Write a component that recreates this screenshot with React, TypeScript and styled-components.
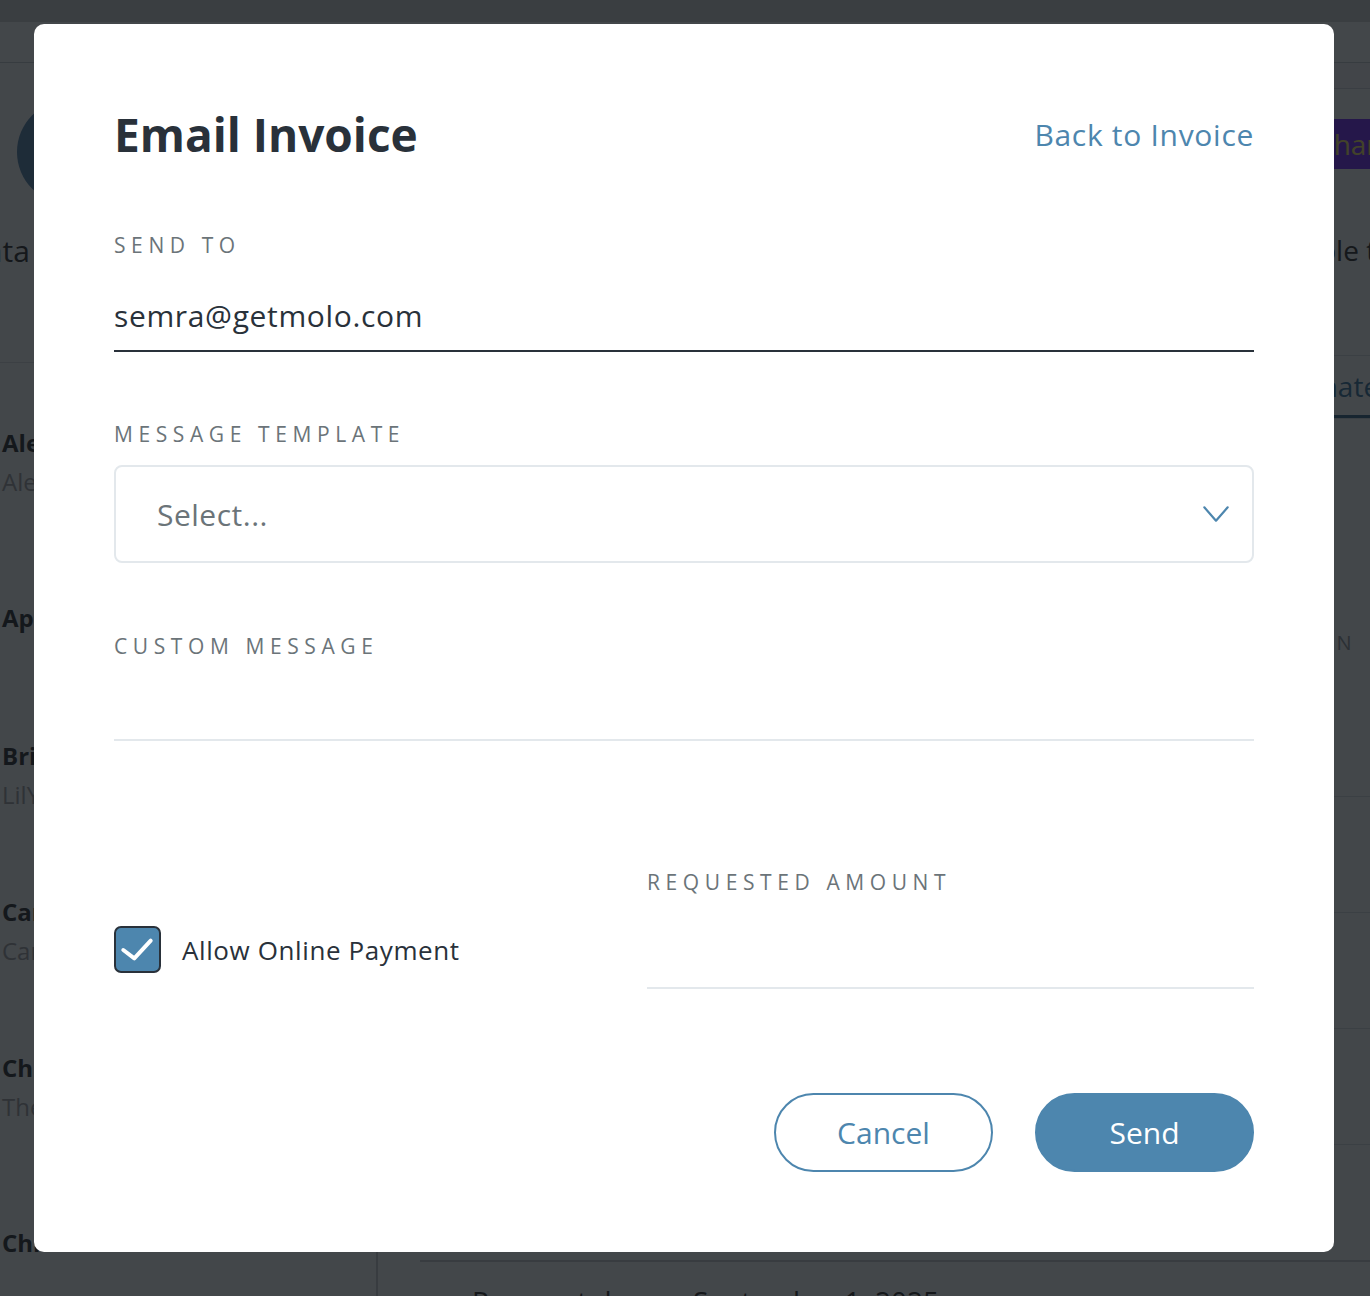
import React from "react";
import styled, { createGlobalStyle } from "styled-components";

const GlobalStyle = createGlobalStyle`
  html, body {
    margin: 0;
    padding: 0;
    background: #fbfcfd;
    overflow: hidden;
  }
  body {
    font-family: "Open Sans", "Noto Sans", Arial, sans-serif;
    color: #29313a;
  }
  * { box-sizing: border-box; }
`;

/* ---------- background page (under the overlay) ---------- */

const Page = styled.div`
  width: 1370px;
  height: 1296px;
  display: flex;
  flex-direction: column;
  overflow: hidden;
  background: #fbfcfd;
`;

const TopBar = styled.div`
  height: 22px;
  flex-shrink: 0;
  background: #cdd2d6;
`;

const SubHeader = styled.div`
  height: 41px;
  flex-shrink: 0;
  border-bottom: 1px solid #c3cad0;
`;

const Body = styled.div`
  flex: 1;
  display: flex;
  min-height: 0;
`;

const Sidebar = styled.aside`
  width: 378px;
  flex-shrink: 0;
  border-right: 2px solid #c6cbcf;
  display: flex;
  flex-direction: column;
  overflow: hidden;
`;

const Profile = styled.div`
  height: 300px;
  flex-shrink: 0;
  border-bottom: 1px solid #d8dde1;
  display: flex;
  flex-direction: column;
  padding-top: 37px;
`;

const Avatar = styled.div`
  width: 104px;
  height: 104px;
  margin-left: 17px;
  border-radius: 50%;
  background: #4b7fa9;
`;

const ProfileName = styled.div`
  margin-top: 29px;
  margin-left: -36px;
  font-size: 30px;
  line-height: 36px;
  color: #222;
  white-space: nowrap;
`;

const ListItem = styled.div<{ $h: number }>`
  height: ${(p) => p.$h}px;
  flex-shrink: 0;
  padding: 65px 0 0 2px;
  white-space: nowrap;
`;

const ItemName = styled.div`
  font-weight: 700;
  font-size: 24px;
  line-height: 30px;
  color: #1d2226;
`;

const ItemSub = styled.div`
  margin-top: 8px;
  font-size: 24px;
  line-height: 32px;
  color: #9a9ea2;
`;

const Main = styled.main`
  flex: 1;
  overflow: hidden;
  display: flex;
  flex-direction: column;
`;

const MainInner = styled.div`
  width: 1200px;
  display: flex;
  flex-direction: column;
`;

const TopStrip = styled.div`
  height: 26px;
  border-bottom: 1px solid #cfd6dc;
  background: #f4f6f8;
`;

const HeaderArea = styled.div`
  height: 266px;
  display: flex;
  flex-direction: column;
  padding-left: 42px;
`;

const PlanButton = styled.div<{ $offset: number }>`
  margin-top: 30px;
  margin-left: ${(p) => p.$offset}px;
  align-self: flex-start;
  height: 50px;
  padding: 0 24px;
  border-radius: 6px;
  background: #6f1cff;
  color: #f5e663;
  font-size: 28px;
  line-height: 50px;
  white-space: nowrap;
`;

const HeaderText = styled.div<{ $offset: number }>`
  margin-top: 64px;
  margin-left: ${(p) => p.$offset}px;
  font-size: 28px;
  line-height: 34px;
  color: #222;
  white-space: nowrap;
`;

const Tabs = styled.div<{ $offset: number }>`
  height: 64px;
  border-top: 1px solid #d5dbe0;
  border-bottom: 1px solid #d5dbe0;
  display: flex;
  padding-left: ${(p) => p.$offset}px;
`;

const Tab = styled.div<{ $active?: boolean }>`
  height: 100%;
  display: flex;
  align-items: center;
  padding: 0 4px;
  font-size: 28px;
  color: ${(p) => (p.$active ? "#2b6f9e" : "#6b7479")};
  border-bottom: 3px solid ${(p) => (p.$active ? "#2b5f86" : "transparent")};
  white-space: nowrap;
`;

const TableHead = styled.div<{ $offset: number }>`
  height: 378px;
  border-bottom: 1px solid #d5dbe0;
  padding: 212px 0 0 ${(p) => p.$offset}px;
  font-size: 20px;
  line-height: 24px;
  letter-spacing: 4px;
  color: #8a9399;
  white-space: nowrap;
`;

const TableRow = styled.div`
  height: 116px;
  flex-shrink: 0;
  border-bottom: 1px solid #d5dbe0;
`;

const Footer = styled.div`
  margin-left: 42px;
  height: 117px;
  flex-shrink: 0;
  border-bottom: 2px solid #c6cbcf;
`;

const FooterText = styled.div`
  margin-left: 94px;
  margin-top: 22px;
  font-size: 28px;
  line-height: 34px;
  color: #222;
  white-space: nowrap;
`;

/* ---------- modal ---------- */

const Overlay = styled.div`
  position: fixed;
  inset: 0;
  background: rgba(18, 21, 26, 0.79);
  padding: 24px 0 0 34px;
  display: flex;
  align-items: flex-start;
  z-index: 10;
`;

const Modal = styled.div`
  width: 1300px;
  background: #ffffff;
  border-radius: 10px;
  padding: 82px 80px 80px;
  display: flex;
  flex-direction: column;
`;

const Header = styled.div`
  height: 56px;
  display: flex;
  align-items: center;
  justify-content: space-between;
`;

const Title = styled.h1`
  margin: 0;
  font-family: "Open Sans", sans-serif;
  font-weight: 700;
  font-size: 46px;
  line-height: 56px;
  color: #29313a;
`;

const BackLink = styled.a`
  font-size: 30px;
  line-height: 41px;
  letter-spacing: 0.7px;
  color: #4d86ae;
  text-decoration: none;
  cursor: pointer;
`;

const Label = styled.div<{ $gap: number }>`
  margin-top: ${(p) => p.$gap}px;
  font-size: 21px;
  line-height: 24px;
  letter-spacing: 5.6px;
  color: #6b7479;
  text-transform: uppercase;
  white-space: nowrap;
`;

const LineInput = styled.input<{ $dark?: boolean; $h: number; $gap: number }>`
  display: block;
  width: 100%;
  height: ${(p) => p.$h}px;
  margin-top: ${(p) => p.$gap}px;
  padding: 0 0 16px;
  border: none;
  border-bottom: 2px solid ${(p) => (p.$dark ? "#29313a" : "#e3e8ec")};
  outline: none;
  background: transparent;
  font-family: "Open Sans", sans-serif;
  font-size: 30px;
  line-height: 36px;
  letter-spacing: 0.65px;
  color: #29313a;
`;

const TextArea = styled.textarea`
  display: block;
  width: 100%;
  height: 83px;
  margin: 0;
  padding: 12px 0 0;
  border: none;
  border-bottom: 2px solid #e3e8ec;
  outline: none;
  resize: none;
  background: transparent;
  font-family: "Open Sans", sans-serif;
  font-size: 28px;
  color: #29313a;
`;

const SelectBox = styled.div`
  margin-top: 19px;
  height: 98px;
  border: 2px solid #e3e8ec;
  border-radius: 8px;
  display: flex;
  align-items: center;
  justify-content: space-between;
  padding: 0 23px 0 41px;
  cursor: pointer;
`;

const Placeholder = styled.span`
  font-size: 30px;
  letter-spacing: 0.5px;
  color: #6b7479;
`;

const PaymentRow = styled.div`
  margin-top: 129px;
  display: grid;
  grid-template-columns: 1fr 607px;
  align-items: start;
`;

const CheckRow = styled.label`
  margin-top: 56px;
  display: flex;
  align-items: center;
  gap: 21px;
  cursor: pointer;
`;

const CheckBox = styled.span<{ $checked: boolean }>`
  width: 47px;
  height: 47px;
  flex-shrink: 0;
  border: 2px solid #29313a;
  border-radius: 7px;
  background: ${(p) => (p.$checked ? "#4d86ae" : "#fff")};
  display: flex;
`;

const CheckText = styled.span`
  font-size: 26px;
  letter-spacing: 0.6px;
  color: #29313a;
`;

const AmountField = styled.div`
  display: flex;
  flex-direction: column;
`;

const Actions = styled.div`
  margin-top: 104px;
  display: flex;
  justify-content: flex-end;
  gap: 42px;
`;

const Button = styled.button<{ $primary?: boolean }>`
  width: 219px;
  height: 79px;
  border-radius: 40px;
  border: 2px solid #4d86ae;
  background: ${(p) => (p.$primary ? "#4d86ae" : "#ffffff")};
  color: ${(p) => (p.$primary ? "#ffffff" : "#4d86ae")};
  font-family: "Open Sans", sans-serif;
  font-size: 30px;
  cursor: pointer;
`;

const contacts = [
  { name: "Alex Morgan", sub: "Alexandra's Dream", h: 175 },
  { name: "Apex Charters", sub: "", h: 138 },
  { name: "Brian Lewis", sub: "LilYacht", h: 156 },
  { name: "Carla Diaz", sub: "Carpe Diem", h: 156 },
  { name: "Chris Baker", sub: "The Wanderer", h: 175 },
  { name: "Chloe Smith", sub: "", h: 156 },
];

export default function App() {
  const [checked, setChecked] = React.useState(true);

  return (
    <>
      <GlobalStyle />
      <Page>
        <TopBar />
        <SubHeader />
        <Body>
          <Sidebar>
            <Profile>
              <Avatar />
              <ProfileName>Data</ProfileName>
            </Profile>
            {contacts.map((c) => (
              <ListItem key={c.name} $h={c.h}>
                <ItemName>{c.name}</ItemName>
                {c.sub && <ItemSub>{c.sub}</ItemSub>}
              </ListItem>
            ))}
          </Sidebar>
          <Main>
            <MainInner>
              <TopStrip />
              <HeaderArea>
                <PlanButton $offset={872}>Change Plan</PlanButton>
                <HeaderText $offset={837}>Payable to Molo</HeaderText>
              </HeaderArea>
              <Tabs $offset={884}>
                <Tab $active>Estimates</Tab>
              </Tabs>
              <TableHead $offset={881}>ACTION</TableHead>
              <TableRow />
              <TableRow />
              <TableRow />
              <Footer />
              <FooterText>Payment due on September 1, 2025</FooterText>
            </MainInner>
          </Main>
        </Body>
      </Page>

      <Overlay>
        <Modal role="dialog" aria-label="Email Invoice">
          <Header>
            <Title>Email Invoice</Title>
            <BackLink>Back to Invoice</BackLink>
          </Header>

          <Label $gap={71}>Send to</Label>
          <LineInput $dark $h={56} $gap={39} defaultValue="semra@getmolo.com" />

          <Label $gap={70}>Message Template</Label>
          <SelectBox>
            <Placeholder>Select...</Placeholder>
            <svg width="26" height="16" viewBox="0 0 26 16" fill="none">
              <polyline
                points="1.3,1.3 13,14.7 24.7,1.3"
                stroke="#4d86ae"
                strokeWidth="2.2"
                strokeLinecap="round"
                strokeLinejoin="round"
              />
            </svg>
          </SelectBox>

          <Label $gap={71}>Custom Message</Label>
          <TextArea />

          <PaymentRow>
            <CheckRow onClick={() => setChecked(!checked)}>
              <CheckBox $checked={checked}>
                {checked && (
                  <svg width="43" height="43" viewBox="0 0 43 43" fill="none">
                    <polyline
                      points="7.3,22 18.3,30.3 34.7,12.7"
                      stroke="#ffffff"
                      strokeWidth="4"
                      strokeLinecap="round"
                      strokeLinejoin="round"
                    />
                  </svg>
                )}
              </CheckBox>
              <CheckText>Allow Online Payment</CheckText>
            </CheckRow>
            <AmountField>
              <Label $gap={0}>Requested Amount</Label>
              <LineInput $h={95} $gap={0} />
            </AmountField>
          </PaymentRow>

          <Actions>
            <Button>Cancel</Button>
            <Button $primary>Send</Button>
          </Actions>
        </Modal>
      </Overlay>
    </>
  );
}
